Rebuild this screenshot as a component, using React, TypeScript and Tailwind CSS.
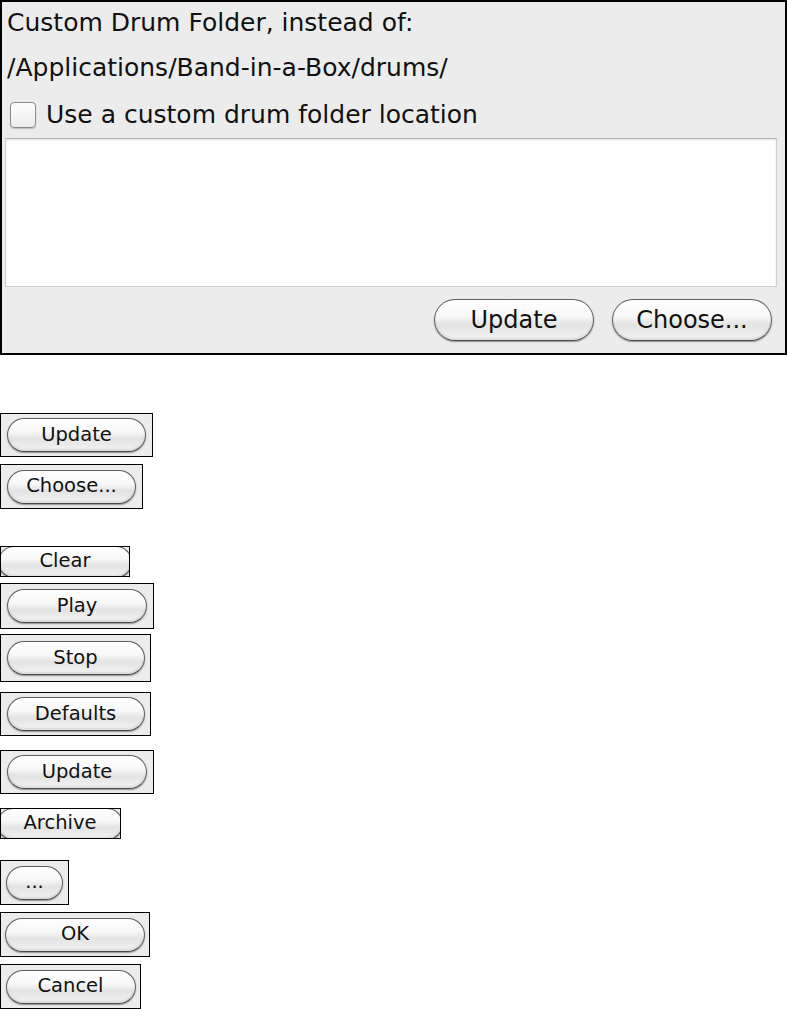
import React from "react";

const pill =
  "rounded-full border border-[#5f5f5f] border-b-[#4a4a4a] bg-[linear-gradient(to_bottom,#ffffff_0%,#f8f8f8_40%,#e3e3e3_62%,#f4f4f4_100%)] shadow-[0_1px_1.5px_rgba(0,0,0,0.4),inset_0_-2px_2px_rgba(0,0,0,0.1),inset_0_1px_1px_rgba(255,255,255,0.9)] flex items-center justify-center text-[#111111] shrink-0";

function BigButton({ label }: { label: string }) {
  return (
    <div className={`${pill} w-[160px] h-[42px] text-[24px] leading-none`}>
      <span className="-mt-[1px]">{label}</span>
    </div>
  );
}

type SmallProps = {
  label: string;
  mt: string;
  boxCls: string;
  pillCls: string;
};

function SmallBox({ label, boxCls, pillCls, mt }: SmallProps) {
  return (
    <div className={`${mt} ${boxCls} border border-black bg-[#ececec] overflow-hidden flex items-center`}>
      <div className={`${pill} ${pillCls} text-[19.5px] leading-none`}>
        <span className="-mt-[1px]">{label}</span>
      </div>
    </div>
  );
}

export default function App() {
  return (
    <div className="w-[787px] h-[1009px] bg-white font-['DejaVu_Sans',sans-serif] text-[#111111] overflow-hidden flex flex-col items-start">
      {/* Main panel */}
      <div className="w-[787px] h-[355px] border-2 border-black bg-[#ececec] flex flex-col">
        <div className="h-[42px] leading-[42px] text-[25px] pl-[5px] whitespace-nowrap">
          Custom Drum Folder, instead of:
        </div>
        <div className="h-[47px] leading-[47px] text-[25px] pl-[5px] whitespace-nowrap">
          /Applications/Band-in-a-Box/drums/
        </div>
        <div className="h-[47px] flex items-center pl-[8px] gap-[10px]">
          <div className="w-[26px] h-[26px] rounded-[4px] border border-[#8a8a8a] bg-[linear-gradient(to_bottom,#fdfdfd,#ececec)] shadow-[0_1px_1px_rgba(0,0,0,0.2)] shrink-0" />
          <span className="text-[25px] leading-[47px] whitespace-nowrap">
            Use a custom drum folder location
          </span>
        </div>
        <div className="ml-[3px] mr-[8px] h-[149px] bg-white border border-[#cfcfcf] border-t-[#b4b4b4] shadow-[inset_0_1px_2px_rgba(0,0,0,0.12)]" />
        <div className="flex-1 flex items-center justify-end gap-[18px] pr-[13px]">
          <BigButton label="Update" />
          <BigButton label="Choose..." />
        </div>
      </div>

      {/* Individual buttons */}
      <SmallBox label="Update" mt="mt-[58px]" boxCls="w-[153px] h-[44px] justify-center" pillCls="w-[139px] h-[34px]" />
      <SmallBox label="Choose..." mt="mt-[7px]" boxCls="w-[143px] h-[45px] justify-center" pillCls="w-[129px] h-[34px]" />
      <SmallBox label="Clear" mt="mt-[37px]" boxCls="w-[130px] h-[31px] justify-end" pillCls="w-[134px] h-[32px] -mr-[3px]" />
      <SmallBox label="Play" mt="mt-[6px]" boxCls="w-[154px] h-[46px] justify-center" pillCls="w-[140px] h-[34px]" />
      <SmallBox label="Stop" mt="mt-[5px]" boxCls="w-[151px] h-[48px] justify-center" pillCls="w-[138px] h-[34px]" />
      <SmallBox label="Defaults" mt="mt-[10px]" boxCls="w-[151px] h-[44px] justify-center" pillCls="w-[138px] h-[34px]" />
      <SmallBox label="Update" mt="mt-[14px]" boxCls="w-[154px] h-[44px] justify-center" pillCls="w-[140px] h-[34px]" />
      <SmallBox label="Archive" mt="mt-[14px]" boxCls="w-[121px] h-[31px] justify-end" pillCls="w-[126px] h-[32px] -mr-[3px]" />
      <SmallBox label="..." mt="mt-[21px]" boxCls="w-[69px] h-[45px] justify-center" pillCls="w-[57px] h-[34px]" />
      <SmallBox label="OK" mt="mt-[7px]" boxCls="w-[150px] h-[45px] justify-center" pillCls="w-[140px] h-[34px]" />
      <SmallBox label="Cancel" mt="mt-[7px]" boxCls="w-[141px] h-[45px] justify-center" pillCls="w-[130px] h-[34px]" />
    </div>
  );
}
